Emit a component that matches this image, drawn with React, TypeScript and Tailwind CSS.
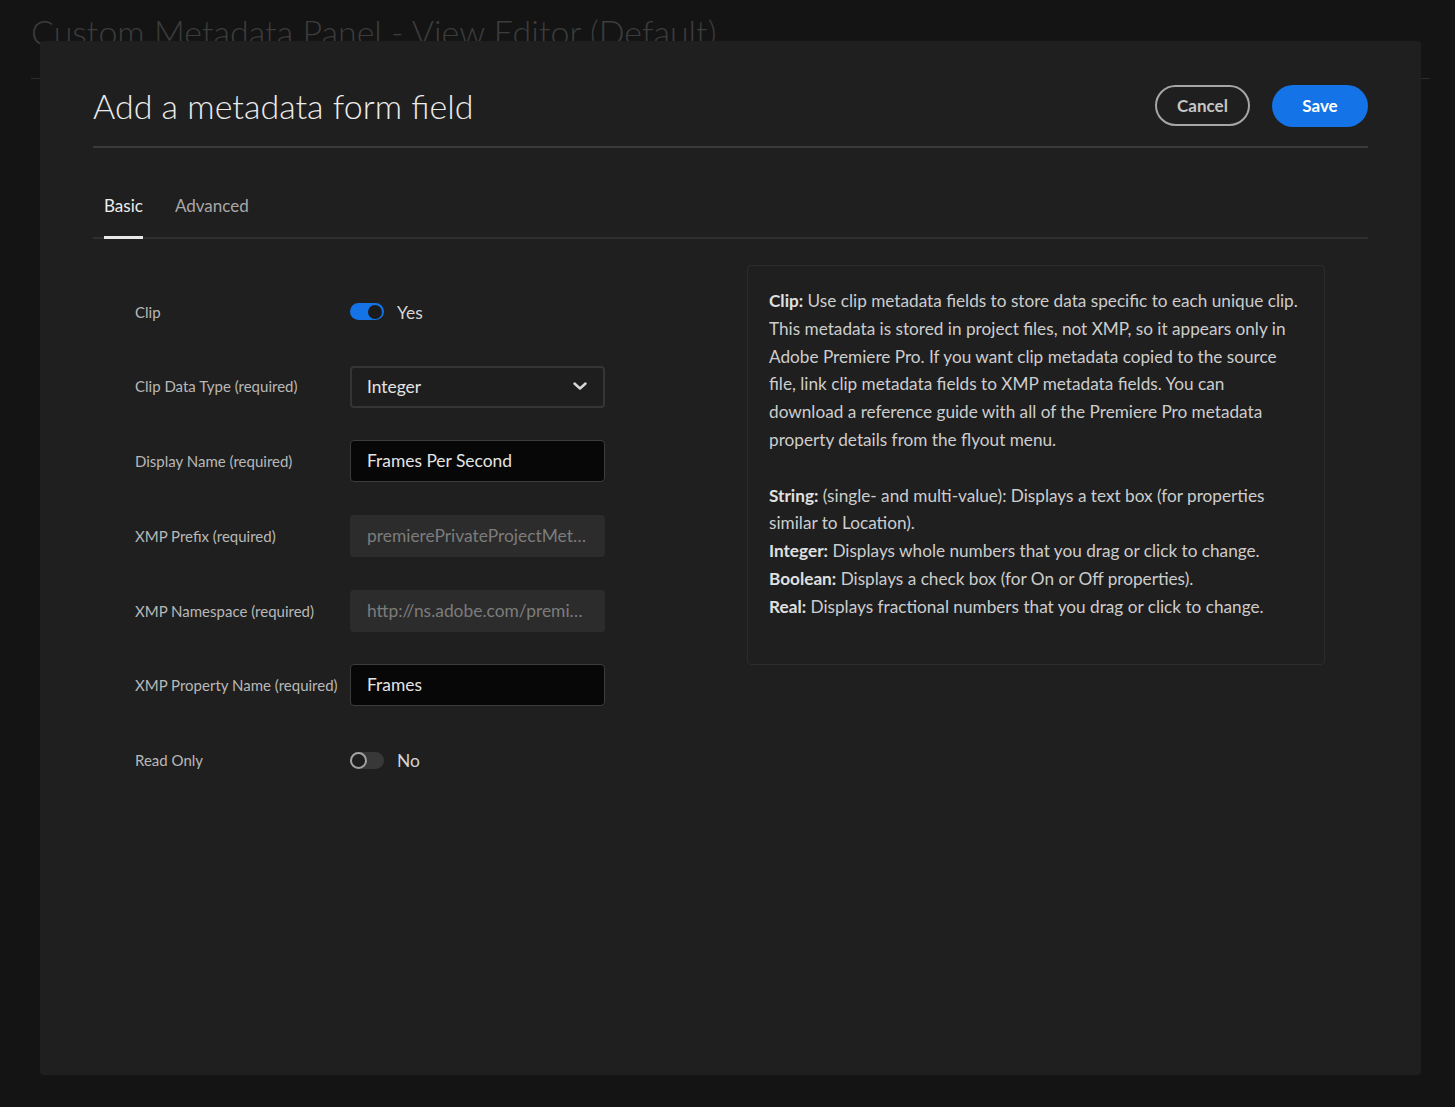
const FONT = "font-['Lato','Open_Sans',sans-serif]";

function Toggle({ on, label }: { on: boolean; label: string }) {
  return (
    <div className="flex items-center gap-[13px]">
      {on ? (
        <div className="flex h-[17px] w-[34px] items-center justify-end rounded-full bg-[#1473e6] pr-[2px]">
          <div className="h-[14px] w-[14px] rounded-full bg-[#1b1b1b]" />
        </div>
      ) : (
        <div className="flex h-[17px] w-[34px] items-center rounded-full bg-[#383838]">
          <div className="h-[17px] w-[17px] rounded-full border-2 border-[#a2a2a2] bg-[#1e1e1e]" />
        </div>
      )}
      <span className="pt-[2px] text-[17.4px] text-[#d6d6d6]">{label}</span>
    </div>
  );
}

function TextBox({ value, disabled }: { value: string; disabled?: boolean }) {
  return (
    <div
      className={
        disabled
          ? "flex h-[42px] w-[255px] items-center rounded-[4px] bg-[#2c2c2c] pl-[17px] pr-[14px] text-[17.4px] text-[#7c7c7c]"
          : "flex h-[42px] w-[255px] items-center rounded-[4px] border border-[#3c3c3c] bg-[#070707] px-[16px] text-[17.4px] text-[#e4e4e4]"
      }
    >
      <span className="truncate">{value}</span>
    </div>
  );
}

function Select({ value }: { value: string }) {
  return (
    <div className="flex h-[42px] w-[255px] items-center justify-between rounded-[4px] border-2 border-[#353535] bg-[#1e1e1e] pl-[15px] pr-[16px] text-[17.4px] text-[#e4e4e4]">
      <span>{value}</span>
      <svg width="14" height="9" viewBox="0 0 14 9" fill="none">
        <path d="M1.5 1.5 L7 6.5 L12.5 1.5" stroke="#d8d8d8" strokeWidth="2.4" strokeLinecap="round" strokeLinejoin="round" />
      </svg>
    </div>
  );
}

const rows: { label: string; control: React.ReactNode }[] = [
  { label: "Clip", control: <Toggle on label="Yes" /> },
  { label: "Clip Data Type (required)", control: <Select value="Integer" /> },
  { label: "Display Name (required)", control: <TextBox value="Frames Per Second" /> },
  { label: "XMP Prefix (required)", control: <TextBox value="premierePrivateProjectMetaData" disabled /> },
  { label: "XMP Namespace (required)", control: <TextBox value="http://ns.adobe.com/premierePrivateProjectMetaData/1.0/" disabled /> },
  { label: "XMP Property Name (required)", control: <TextBox value="Frames" /> },
  { label: "Read Only", control: <Toggle on={false} label="No" /> },
];

export default function App() {
  return (
    <div className={`relative h-[1107px] w-[1455px] overflow-hidden bg-[#141414] ${FONT}`}>
      {/* page behind the dialog */}
      <div className="px-[31px] pt-[8px]">
        <h1 className="text-[34px] font-light leading-[48px] text-[#3c3c3c]">
          Custom Metadata Panel - View Editor (Default)
        </h1>
        <div className="mt-[22px] h-px w-[1399px] bg-[#2c2c2c]" />
      </div>

      {/* dialog */}
      <div className="absolute left-[40px] top-[41px] h-[1034px] w-[1381px] rounded-[4px] bg-[#1f1f1f] px-[53px] pt-[41px]">
        <div className="flex items-center justify-between">
          <h2 className="pb-[2px] text-[34px] font-light leading-[48px] text-[#ececec]">Add a metadata form field</h2>
          <div className="flex items-center gap-[22px] pb-[3px]">
            <button className="h-[41px] w-[95px] rounded-full border-2 border-[#a6a6a6] text-[17px] font-bold text-[#c6c6c6]">
              Cancel
            </button>
            <button className="h-[42px] w-[96px] rounded-full bg-[#1473e6] text-[17px] font-bold text-white">
              Save
            </button>
          </div>
        </div>
        <div className="mt-[14px] h-[2px] bg-[#3a3a3a]" />

        <div className="mt-[46px] flex gap-[32px] border-b-2 border-[#2f2f2f] pl-[11px]">
          <div className="-mb-[2px] border-b-[3px] border-[#e8e8e8] pb-[16px] text-[17px] leading-[24px] text-[#ececec]">
            Basic
          </div>
          <div className="pb-[19px] text-[17px] leading-[24px] text-[#a8a8a8]">Advanced</div>
        </div>

        <div className="flex items-start pt-[26px]">
          <div className="ml-[42px] mt-[26px] flex w-[470px] flex-col gap-[32.7px]">
            {rows.map((r) => (
              <div key={r.label} className="flex h-[42px] items-center">
                <div className="w-[215px] text-[15px] text-[#b8b8b8]">{r.label}</div>
                {r.control}
              </div>
            ))}
          </div>

          <div className="ml-[142px] w-[578px] rounded-[4px] border border-[#2c2c2c] pb-[43px] pl-[21px] pr-[24px] pt-[21px] text-[17.2px] leading-[27.8px] text-[#cdcdcd]">
            <p>
              <b className="font-bold text-[#e0e0e0]">Clip:</b> Use clip metadata fields to store data specific to each unique clip.
              This metadata is stored in project files, not XMP, so it appears only in Adobe Premiere Pro. If you want clip metadata
              copied to the source file, link clip metadata fields to XMP metadata fields. You can download a reference guide with
              all of the Premiere Pro metadata property details from the flyout menu.
            </p>
            <p className="mt-[27.8px]">
              <b className="font-bold text-[#e0e0e0]">String:</b> (single- and multi-value): Displays a text box (for properties
              similar to Location).
            </p>
            <p>
              <b className="font-bold text-[#e0e0e0]">Integer:</b> Displays whole numbers that you drag or click to change.
            </p>
            <p>
              <b className="font-bold text-[#e0e0e0]">Boolean:</b> Displays a check box (for On or Off properties).
            </p>
            <p>
              <b className="font-bold text-[#e0e0e0]">Real:</b> Displays fractional numbers that you drag or click to change.
            </p>
          </div>
        </div>
      </div>
    </div>
  );
}
